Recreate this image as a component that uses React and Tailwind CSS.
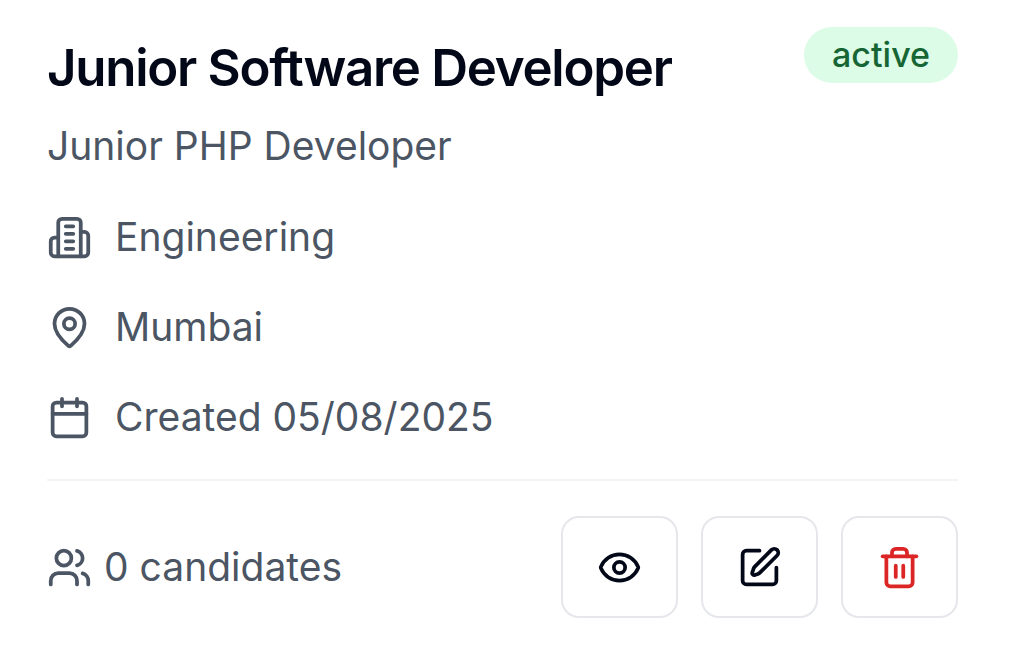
import { MapPin, Calendar, Users, Eye } from "lucide-react";

function LineIcon({ size, children }) {
  return (
    <svg width={size} height={size} viewBox="0 0 24 24" fill="none" stroke="currentColor" strokeWidth="2" strokeLinecap="round" strokeLinejoin="round" aria-hidden="true">
      {children}
    </svg>
  );
}

function OfficeIcon({ size }) {
  return (
    <LineIcon size={size}>
      <path d="M6 22V4a2 2 0 0 1 2-2h8a2 2 0 0 1 2 2v18Z" />
      <path d="M6 12H4a2 2 0 0 0-2 2v6a2 2 0 0 0 2 2h2" />
      <path d="M18 9h2a2 2 0 0 1 2 2v9a2 2 0 0 1-2 2h-2" />
      <path d="M10 6h4M10 10h4M10 14h4M10 18h4" />
    </LineIcon>
  );
}

function EditIcon({ size }) {
  return (
    <LineIcon size={size}>
      <path d="M12 3H5a2 2 0 0 0-2 2v14a2 2 0 0 0 2 2h14a2 2 0 0 0 2-2v-7" />
      <path d="M18.375 2.625a1 1 0 0 1 3 3l-9.013 9.014a4 4 0 0 1-1.3.85l-1.5.5a1.1 1.1 0 0 1-1.4-1.4l.5-1.5a4 4 0 0 1 .7-1.45z" />
    </LineIcon>
  );
}

function TrashIcon({ size }) {
  return (
    <LineIcon size={size}>
      <path d="M3 6h18" />
      <path d="M19 6v14c0 1-1 2-2 2H7c-1 0-2-1-2-2V6" />
      <path d="M8 6V4c0-1 1-2 2-2h4c1 0 2 1 2 2v2" />
      <path d="M10 11v6M14 11v6" />
    </LineIcon>
  );
}

const details = [
  { icon: OfficeIcon, text: "Engineering" },
  { icon: MapPin, text: "Mumbai" },
  { icon: Calendar, text: "Created 05/08/2025" },
];

const actions = [
  { icon: Eye, label: "View job", color: "text-[#020817]" },
  { icon: EditIcon, label: "Edit job", color: "text-[#020817]" },
  { icon: TrashIcon, label: "Delete job", color: "text-[#dc2626]" },
];

export default function App() {
  return (
    <article className="bg-white pt-[27px] pr-[54px] pb-12 pl-[47px] font-['Inter',sans-serif] text-[39px] leading-[56px] text-[#4b5563]">
      <header className="flex items-start justify-between">
        <div>
          <h2 className="pt-[13px] text-[51px] font-semibold tracking-tight text-[#020817]">Junior Software Developer</h2>
          <p className="mt-[22px]">Junior PHP Developer</p>
        </div>
        <span className="rounded-full bg-[#dcfce7] px-7 text-[34px] font-medium text-[#166534]">active</span>
      </header>
      <ul className="mt-[35px] flex flex-col gap-[34px]">
        {details.map(({ icon: Icon, text }) => (
          <li key={text} className="flex items-center gap-[23px]">
            <Icon size={45} />
            <span>{text}</span>
          </li>
        ))}
      </ul>
      <footer className="mt-[34px] flex items-center justify-between border-t-2 border-[#f3f4f6] pt-[35px]">
        <div className="flex items-center gap-3">
          <Users size={45} aria-hidden="true" />
          <span>0 candidates</span>
        </div>
        <div className="flex gap-[23px]">
          {actions.map(({ icon: Icon, label, color }) => (
            <button key={label} type="button" aria-label={label} className={`flex h-[102px] w-[117px] items-center justify-center rounded-[18px] border-2 border-[#e5e7eb] ${color}`}>
              <Icon size={45} />
            </button>
          ))}
        </div>
      </footer>
    </article>
  );
}
